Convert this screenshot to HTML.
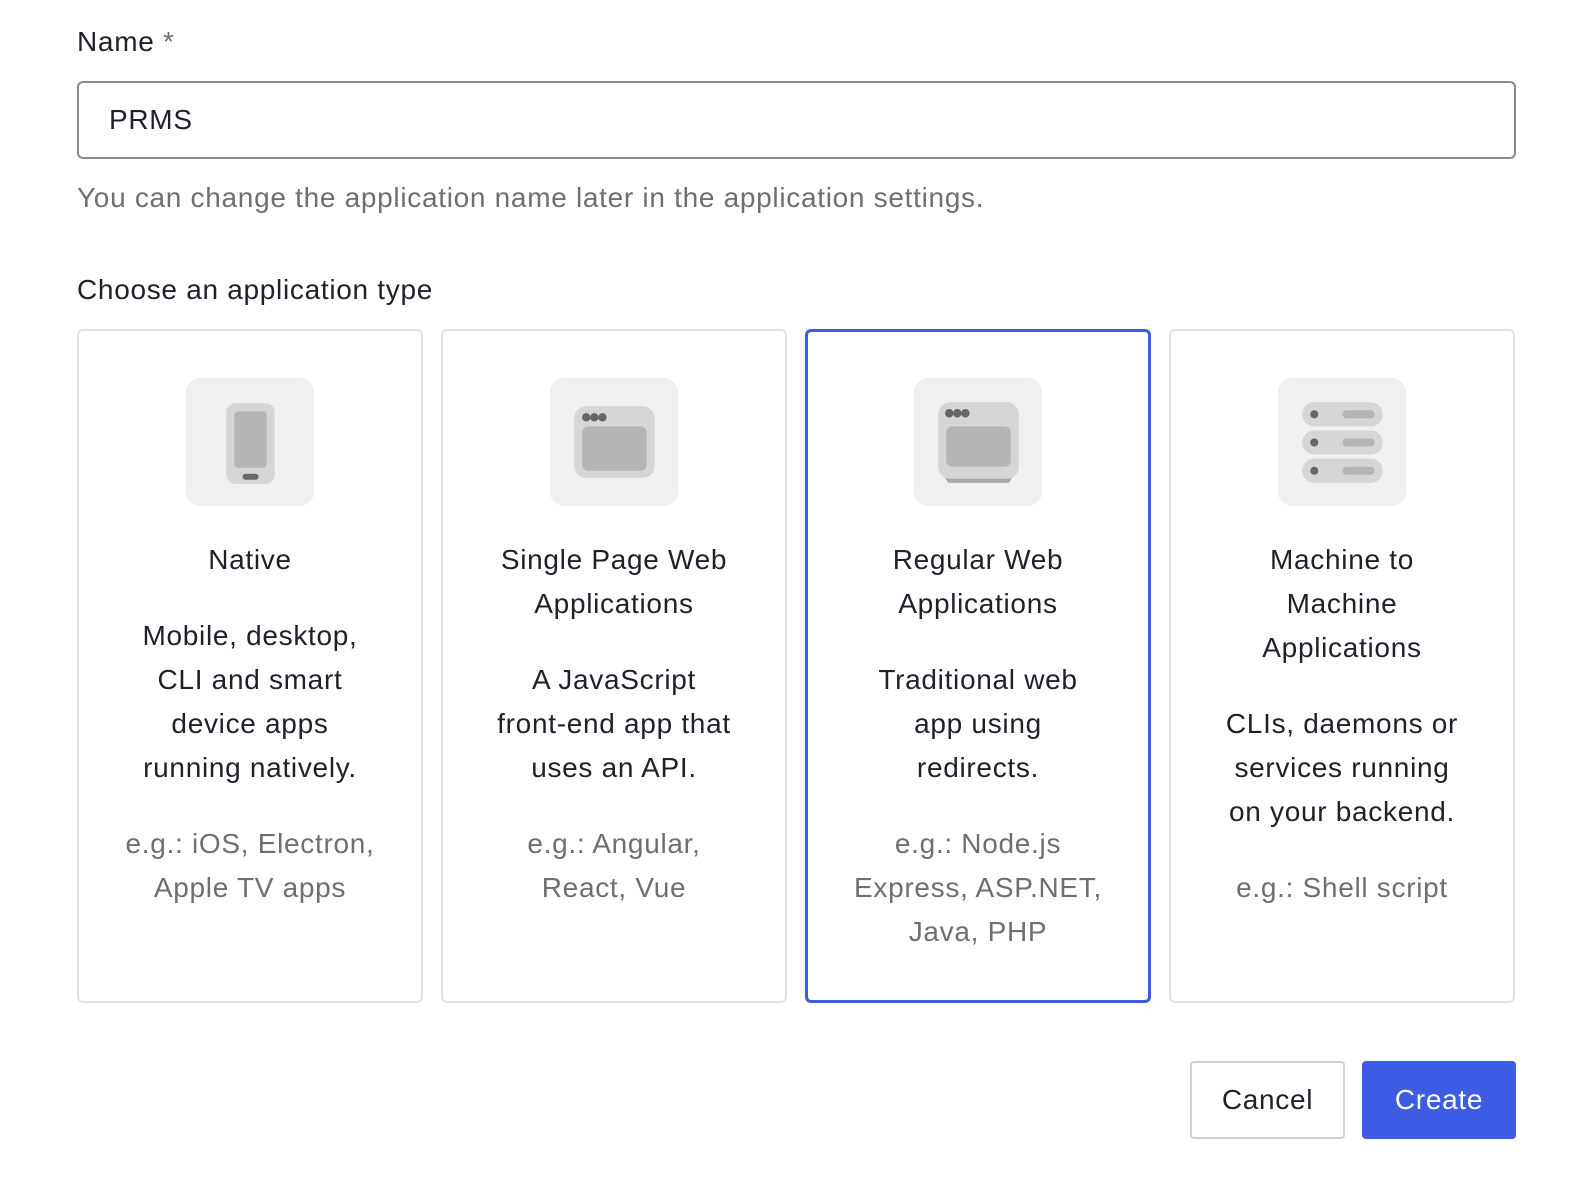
<!DOCTYPE html>
<html><head><meta charset="utf-8"><style>
*{margin:0;padding:0;box-sizing:border-box}
body{width:1594px;height:1178px;background:#fff;font-family:"Liberation Sans",sans-serif;color:#1e212a;position:relative;overflow:hidden;letter-spacing:0.7px}
.a{position:absolute}
.lbl{left:77px;top:24px;font-size:28px;line-height:36px}
.inp{left:77px;top:81px;width:1439px;height:78px;border:2px solid #8a8a8a;border-radius:6px;font-size:28px;padding-left:30px;line-height:74px}
.help{left:77px;top:180px;font-size:28px;color:#6f6f6f;line-height:36px}
.h2{left:77px;top:272px;font-size:28px;line-height:36px}
.card{top:329px;width:346px;height:674px;border:2px solid #e4e4e4;border-radius:6px;text-align:center}
.card.sel{border:3px solid #3d5ce3}
.ib{position:absolute;left:107px;top:47px;width:128px;height:128px;background:#f0f0f0;border-radius:14px}
.t{position:absolute;left:10px;right:10px;top:207px;font-size:28px;line-height:44px}
.d{font-size:28px;line-height:44px;margin-top:32px}
.e{font-size:28px;line-height:44px;color:#6f6f6f;margin-top:32px}
.btn{top:1061px;height:78px;border-radius:4px;font-size:28px;line-height:74px;text-align:center}
</style></head><body>
<div class="a lbl">Name <span style="color:#6f6f6f">*</span></div>
<div class="a inp">PRMS</div>
<div class="a help">You can change the application name later in the application settings.</div>
<div class="a h2">Choose an application type</div>

<div class="a card" style="left:77px">
 <div class="ib"><svg width="128" height="128" viewBox="0 0 127 127">
  <rect x="40" y="25" width="48" height="80" rx="9" fill="#d6d6d6"/>
  <rect x="48" y="33" width="32" height="56" rx="4" fill="#b5b5b5"/>
  <rect x="56" y="95" width="16" height="6" rx="3" fill="#6a6a6a"/></svg></div>
 <div class="t">Native<div class="d">Mobile, desktop,<br>CLI and smart<br>device apps<br>running natively.</div><div class="e">e.g.: iOS, Electron,<br>Apple TV apps</div></div>
</div>

<div class="a card" style="left:441px">
 <div class="ib"><svg width="128" height="128" viewBox="0 0 127 127">
  <rect x="24" y="28" width="80" height="71" rx="12" fill="#d6d6d6"/>
  <rect x="32" y="48" width="64" height="44" rx="6" fill="#b5b5b5"/>
  <circle cx="36" cy="39" r="4.2" fill="#666"/><circle cx="44" cy="39" r="4.2" fill="#666"/><circle cx="52" cy="39" r="4.2" fill="#666"/></svg></div>
 <div class="t">Single Page Web<br>Applications<div class="d">A JavaScript<br>front-end app that<br>uses an API.</div><div class="e">e.g.: Angular,<br>React, Vue</div></div>
</div>

<div class="a card sel" style="left:805px">
 <div class="ib" style="left:106px;top:46px"><svg width="128" height="128" viewBox="0 0 127 127">
  <path d="M26 92 L34 104 H94 L102 92 Z" fill="#aaa"/>
  <rect x="24" y="24" width="80" height="76" rx="12" fill="#d6d6d6"/>
  <rect x="32" y="48" width="64" height="40" rx="6" fill="#b5b5b5"/>
  <circle cx="35" cy="35" r="4.2" fill="#666"/><circle cx="43" cy="35" r="4.2" fill="#666"/><circle cx="51" cy="35" r="4.2" fill="#666"/></svg></div>
 <div class="t" style="top:206px">Regular Web<br>Applications<div class="d">Traditional web<br>app using<br>redirects.</div><div class="e">e.g.: Node.js<br>Express, ASP.NET,<br>Java, PHP</div></div>
</div>

<div class="a card" style="left:1169px">
 <div class="ib"><svg width="128" height="128" viewBox="0 0 127 127">
  <g fill="#d6d6d6"><rect x="24" y="24" width="80" height="24" rx="12"/><rect x="24" y="52" width="80" height="24" rx="12"/><rect x="24" y="80" width="80" height="24" rx="12"/></g>
  <g fill="#666"><circle cx="36" cy="36" r="4"/><circle cx="36" cy="64" r="4"/><circle cx="36" cy="92" r="4"/></g>
  <g fill="#b5b5b5"><rect x="64" y="32" width="32" height="8" rx="4"/><rect x="64" y="60" width="32" height="8" rx="4"/><rect x="64" y="88" width="32" height="8" rx="4"/></g></svg></div>
 <div class="t">Machine to<br>Machine<br>Applications<div class="d">CLIs, daemons or<br>services running<br>on your backend.</div><div class="e">e.g.: Shell script</div></div>
</div>

<div class="a btn" style="left:1190px;width:155px;border:2px solid #d0d0d0">Cancel</div>
<div class="a btn" style="left:1362px;width:154px;background:#3d5ce3;color:#fff;line-height:78px">Create</div>
</body></html>
